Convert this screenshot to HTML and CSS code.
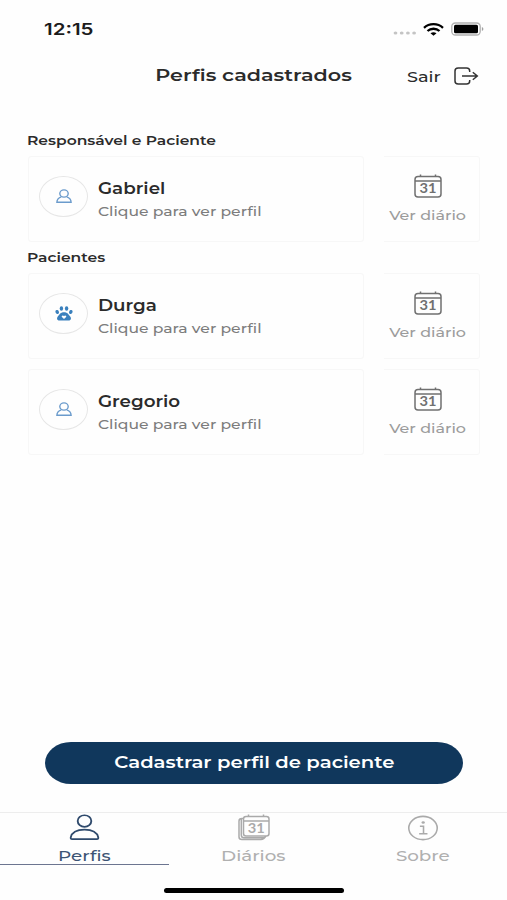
FILE: index.html
```html
<!DOCTYPE html>
<html lang="pt-BR">
<head>
    <meta charset="UTF-8">
    <meta name="viewport" content="width=device-width, initial-scale=1.0">
    <title>Perfis cadastrados</title>
    <link rel="stylesheet" href="styles.css">
</head>
<body>

<!-- Shared icons -->
<svg class="sprite">
    <symbol id="icon-user" viewBox="0 0 30 28" preserveAspectRatio="none">
        <ellipse cx="15" cy="7.3" rx="6.6" ry="6"/>
        <path d="M3 26H27Q28.6 26 28.3 24.3C27.3 19.5 22.5 16.2 15 16.2S2.7 19.5 1.7 24.3Q1.4 26 3 26Z"/>
    </symbol>
    <symbol id="icon-user-small" viewBox="0 0 16 14">
        <ellipse cx="8" cy="4.5" rx="4.2" ry="3.6"/>
        <path d="M5.3 7.8C2.6 8.6 1 10.3 .9 13.2H15.1C15 10.300 13.400 8.600 10.700 7.800"/>
    </symbol>
    <symbol id="icon-calendar" viewBox="0 0 28 24" preserveAspectRatio="none">
        <rect x="1" y="2.5" width="26" height="20.5" rx="3"/>
        <path d="M1 7H27M6.5 .5V2.5M21.5 .5V2.5"/>
        <text x="14" y="19.4" text-anchor="middle" textLength="17" lengthAdjust="spacingAndGlyphs">31</text>
    </symbol>
</svg>

<div class="screen">

    <div class="status-bar">
        <span class="clock">12:15</span>
        <div class="status-icons">
            <svg width="24" height="4" viewBox="0 0 24 4" fill="#c4c4c4">
                <ellipse cx="2.5" cy="2" rx="1.9" ry="1.6"/><ellipse cx="8.7" cy="2" rx="1.9" ry="1.6"/>
                <ellipse cx="14.9" cy="2" rx="1.9" ry="1.6"/><ellipse cx="21.1" cy="2" rx="1.9" ry="1.6"/>
            </svg>
            <svg class="wifi" width="21" height="13" viewBox="0 0 21 13">
                <path d="M1 4.8C6.3 0 14.7 0 20 4.8M4.5 8C7.8 5 13.2 5 16.5 8" fill="none" stroke="#000" stroke-width="2.3"/>
                <path d="M7.5 10.3Q10.5 8.1 13.5 10.3L10.5 12.8Z"/>
            </svg>
            <svg class="battery" width="33" height="14" viewBox="0 0 33 14">
                <rect x=".8" y="1" width="28.4" height="12" rx="3.5" fill="none" stroke="#b0b0b0" stroke-width="1.3"/>
                <rect x="3" y="2.8" width="24" height="8.4" rx="1.5"/>
                <path d="M30.9 5V9Q32.4 8.5 32.4 7T30.9 5Z" fill="#a0a0a0"/>
            </svg>
        </div>
    </div>

    <div class="header">
        <h1><span>Perfis cadastrados</span></h1>
        <a class="logout"><span>Sair</span>
            <svg width="25" height="18" viewBox="0 0 25 18">
                <path d="M15.7 5V4Q15.7 1 12.5 1H4.2Q1 1 1 4V14Q1 17 4.2 17H12.5Q15.7 17 15.7 14V13M8 9H23M18.8 5.2L23.3 9L18.8 12.8"/>
            </svg>
        </a>
    </div>

    <div class="profiles">
        <h2><span>Responsável e Paciente</span></h2>
        <div class="row">
            <div class="card">
                <div class="avatar"><svg><use href="#icon-user-small"/></svg></div>
                <div class="info">
                    <p class="name"><span>Gabriel</span></p>
                    <p class="hint"><span>Clique para ver perfil</span></p>
                </div>
            </div>
            <div class="diary">
                <svg><use href="#icon-calendar"/></svg>
                <span>Ver diário</span>
            </div>
        </div>

        <h2><span>Pacientes</span></h2>
        <div class="row">
            <div class="card">
                <div class="avatar">
                    <svg class="paw" viewBox="0 0 18 15">
                        <ellipse cx="2.2" cy="6" rx="1.7" ry="2" transform="rotate(-20 2.2 6)"/>
                        <ellipse cx="6.4" cy="2.5" rx="1.7" ry="2.2"/>
                        <ellipse cx="11.6" cy="2.5" rx="1.7" ry="2.2"/>
                        <ellipse cx="15.8" cy="6" rx="1.7" ry="2" transform="rotate(20 15.8 6)"/>
                        <path fill-rule="evenodd" d="M9 6.3C5.4 6.3 4.3 8.7 2.6 10.8C1.3 13 2.4 14.6 4.6 14.5H13.4C15.6 14.6 16.7 13 15.4 10.8C13.7 8.7 12.6 6.3 9 6.3ZM9 13L6.9 11.1C6.1 9.8 7.9 8.8 9 10.1C10.1 8.8 11.9 9.8 11.1 11.1Z"/>
                    </svg>
                </div>
                <div class="info">
                    <p class="name"><span>Durga</span></p>
                    <p class="hint"><span>Clique para ver perfil</span></p>
                </div>
            </div>
            <div class="diary">
                <svg><use href="#icon-calendar"/></svg>
                <span>Ver diário</span>
            </div>
        </div>
        <div class="row">
            <div class="card">
                <div class="avatar"><svg><use href="#icon-user-small"/></svg></div>
                <div class="info">
                    <p class="name"><span>Gregorio</span></p>
                    <p class="hint"><span>Clique para ver perfil</span></p>
                </div>
            </div>
            <div class="diary">
                <svg><use href="#icon-calendar"/></svg>
                <span>Ver diário</span>
            </div>
        </div>
    </div>

    <button class="register-button"><span>Cadastrar perfil de paciente</span></button>

    <div class="tabs">
        <div class="tab active">
            <svg><use href="#icon-user"/></svg>
            <span>Perfis</span>
        </div>
        <div class="tab">
            <svg viewBox="0 0 32 27">
                <path d="M10.5 .5V2.5M25.5 .5V2.5M5.5 7H31M8 2.5H28.5Q31 2.5 31 5V19.5Q31 22 28.5 22H8Q5.5 22 5.5 19.5V5Q5.5 2.5 8 2.5ZM5.5 4.5H4Q1 4.5 1 7V23Q1 25.5 4 25.5H23Q26 25.5 28 22M3.3 5V21Q3.3 23.8 6 23.8H27"/>
                <text x="18.3" y="19" text-anchor="middle" textLength="17" lengthAdjust="spacingAndGlyphs">31</text>
            </svg>
            <span>Diários</span>
        </div>
        <div class="tab">
            <svg viewBox="0 0 30 26">
                <ellipse cx="15" cy="13.5" rx="13.7" ry="11.2"/>
                <path d="M12 11.8H15.5V18.8M11.3 19H19.3"/>
                <ellipse class="dot" cx="15.2" cy="8.2" rx="1.6" ry="1.3"/>
            </svg>
            <span>Sobre</span>
        </div>
    </div>

    <div class="home-indicator"></div>

</div>

</body>
</html>
```

FILE: styles.css
```css
* {
    box-sizing: border-box;
}

body {
    margin: 0;
    background-color: #fefefe;
    font-family: Montserrat, Inter, sans-serif;
    color: #2b2b2b;
}

h1, h2, p {
    margin: 0;
}

/* Wide lettering used on every label */
span {
    display: inline-block;
    white-space: nowrap;
    transform: scaleX(1.18);
    transform-origin: left center;
}

.sprite {
    display: none;
}

.screen {
    display: flex;
    flex-direction: column;
    width: 507px;
    height: 900px;
}

.status-bar {
    display: flex;
    justify-content: space-between;
    align-items: center;
    height: 58px;
    padding: 0 23px 0 44px;
}

.clock {
    font-family: Inter, sans-serif;
    font-size: 16px;
    font-weight: 600;
    color: #1c1c1c;
    transform: scaleX(1.28);
}

.status-icons {
    display: flex;
    align-items: center;
}

.status-icons > svg:first-child {
    margin-top: 8px;
}

.wifi {
    margin: 0 7px 0 6px;
}

.header {
    display: grid;
    grid-template-columns: 1fr auto 1fr;
    align-items: center;
    height: 36px;
    padding: 0 28px;
}

.header h1 {
    grid-column: 2;
    font-size: 17px;
    font-weight: 600;
    line-height: 20px;
    padding-bottom: 2px;
}

.header h1 span {
    transform: scaleX(1.22);
}

.header h1 span, .diary span, .register-button span, .tab span {
    transform-origin: center;
}

.logout {
    display: flex;
    justify-content: flex-end;
    align-items: center;
    gap: 18px;
    font-size: 15px;
    font-weight: 500;
}

.logout svg {
    fill: none;
    stroke: #333;
    stroke-width: 1.5;
}

.profiles {
    flex: 1;
    padding: 36px 27px 0;
}

h2 {
    height: 26px;
    font-size: 13px;
    font-weight: 600;
    line-height: 20px;
}

h2 span {
    transform: scaleX(1.195);
}

.row {
    display: flex;
    justify-content: space-between;
    height: 86px;
    margin: 0 0 10px 1px;
}

.row:nth-of-type(1) {
    margin-bottom: 5px;
}

.card {
    display: flex;
    align-items: center;
    width: 336px;
    padding: 0 0 6px 10px;
    border: 1px solid #f7f7f7;
    border-radius: 3px;
}

.avatar {
    display: flex;
    justify-content: center;
    align-items: center;
    width: 49px;
    height: 41px;
    border: 1.5px solid #e6e6e6;
    border-radius: 50%;
}

.avatar svg {
    width: 16px;
    height: 14px;
    fill: none;
    stroke: #6b9bcc;
    stroke-width: 1.4;
}

.avatar .paw {
    width: 18px;
    height: 15px;
    fill: #3a80bd;
    stroke: none;
}

.info {
    padding: 7px 0 0 10px;
}

.name {
    font-size: 15.5px;
    font-weight: 600;
    line-height: 24px;
}

.hint {
    font-size: 13.5px;
    font-weight: 500;
    line-height: 21px;
    color: #7c7c7c;
}

.hint span {
    transform: scaleX(1.155);
}

.diary {
    display: flex;
    flex-direction: column;
    align-items: center;
    width: 96px;
    padding: 17px 8px 0 0;
    border: 1px solid #f7f7f7;
    border-left: none;
    border-radius: 0 3px 3px 0;
    font-size: 13.5px;
    font-weight: 500;
    line-height: 20px;
    color: #9c9c9c;
}

.diary svg {
    width: 28px;
    height: 24px;
    margin-bottom: 7px;
    fill: none;
    stroke: #707070;
    stroke-width: 1.5;
}

svg text {
    font-family: Lato, sans-serif;
    font-size: 13.5px;
    font-weight: 700;
    fill: #707070;
    stroke: none;
}

.register-button {
    width: 418px;
    height: 42px;
    margin: 0 auto 28px 45px;
    padding: 0 0 2px;
    border: none;
    border-radius: 26px / 21px;
    background-color: #10375c;
    color: white;
    font-family: inherit;
    font-size: 17px;
    font-weight: 600;
    cursor: pointer;
}

.register-button span {
    transform: scaleX(1.155);
}

.tabs {
    display: grid;
    grid-template-columns: repeat(3, 1fr);
    height: 54px;
    border-top: 1px solid #ededed;
}

.tab {
    display: flex;
    flex-direction: column;
    align-items: center;
    height: 52px;
    padding-top: 1px;
    border-bottom: 1.5px solid transparent;
    font-size: 15.5px;
    font-weight: 500;
    line-height: 20px;
    color: #b0b0b0;
}

.tab svg {
    flex-shrink: 0;
    width: 32px;
    height: 27px;
    margin-bottom: 5px;
    fill: none;
    stroke: #aaa;
    stroke-width: 1.5;
}

.tab svg text {
    fill: #aaa;
}

.tab .dot {
    fill: #aaa;
    stroke: none;
}

.active {
    border-bottom-color: #6c7590;
    color: #3c5474;
}

.active svg {
    width: 31px;
    stroke: #2f4a6c;
    stroke-width: 1.8;
}

.home-indicator {
    width: 180px;
    height: 5px;
    margin: 22px auto 7px 164px;
    border-radius: 3px;
    background-color: #000;
}
```
